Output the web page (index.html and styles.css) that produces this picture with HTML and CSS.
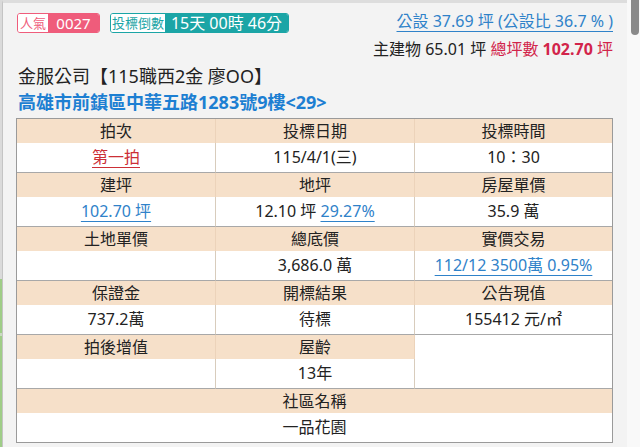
FILE: index.html
```html
<!DOCTYPE html>
<html lang="zh-Hant">
<head>
<meta charset="utf-8">
<link rel="stylesheet" href="styles.css">
</head>
<body>
<div class="page">
  <div class="edge"></div>
  <div class="panel">
    <div class="top">
      <div class="badges">
        <div class="badge pink"><span class="lbl lbl-pop">人氣</span><span class="val val-pop">0027</span></div>
        <div class="badge teal"><span class="lbl lbl-cd">投標倒數</span><span class="val val-cd">15天 00時 46分</span></div>
      </div>
      <div class="areas">
        <div class="line"><a class="link">公設 37.69 坪 (公設比 36.7 % )</a></div>
        <div class="line">主建物 65.01 坪 <span class="red">總坪數 <b>102.70</b> 坪</span></div>
      </div>
    </div>
    <div class="title">金服公司【115職西2金 廖OO】</div>
    <div class="addr">高雄市前鎮區中華五路1283號9樓&lt;29&gt;</div>
    <div class="sheet">
      <div class="h">拍次</div><div class="h">投標日期</div><div class="h">投標時間</div>
      <div class="v"><a class="redlink">第一拍</a></div><div class="v">115/4/1(三)</div><div class="v">10：30</div>

      <div class="h">建坪</div><div class="h">地坪</div><div class="h">房屋單價</div>
      <div class="v"><a class="link">102.70 坪</a></div><div class="v"><span>12.10 坪 <a class="link">29.27%</a></span></div><div class="v">35.9 萬</div>

      <div class="h">土地單價</div><div class="h">總底價</div><div class="h">實價交易</div>
      <div class="v"></div><div class="v">3,686.0 萬</div><div class="v"><a class="link">112/12 3500萬 0.95%</a></div>

      <div class="h">保證金</div><div class="h">開標結果</div><div class="h">公告現值</div>
      <div class="v">737.2萬</div><div class="v">待標</div><div class="v">155412 元/㎡</div>

      <div class="h">拍後增值</div><div class="h">屋齡</div><div class="blank"></div>
      <div class="v"></div><div class="v">13年</div>

      <div class="h wide">社區名稱</div>
      <div class="v wide last">一品花園</div>
    </div>
  </div>
  <div class="scroll"><div class="thumb"></div></div>
</div>
</body>
</html>
```

FILE: styles.css
```css
* { box-sizing: border-box; }
html, body { margin: 0; padding: 0; }
body {
  font-family: "Noto Sans", "Noto Sans CJK TC", sans-serif;
  color: #222;
  background: #f8f8f8;
}
.page {
  display: flex;
  width: 640px;
  height: 447px;
  overflow: hidden;
}
.edge {
  width: 2px;
  flex: none;
  background: linear-gradient(#dadada 0, #dadada 279px, #9fcd88 279px, #9fcd88 333px, #c9dcc0 333px, #c9dcc0 336px, #9fcd88 336px);
}
.panel {
  width: 625px;
  flex: none;
  background: #f3f3f3;
  border-top: 3px solid #dddddd;
  border-left: 1px solid #c4c4c4;
  padding: 4px 14px 0 13px;
}
.scroll {
  flex: 1;
  background: #f9f9f9;
  padding-left: 4px;
}
.thumb {
  width: 8px;
  height: 35px;
  background: #8a8a8a;
  border-radius: 0 0 4px 4px;
}
.top {
  display: flex;
  justify-content: space-between;
  align-items: flex-start;
}
.badges {
  display: flex;
  gap: 10px;
  margin-top: 6px;
  margin-left: 1px;
}
.badge {
  display: flex;
  height: 20px;
  border: 1px solid;
  border-radius: 3px;
  overflow: hidden;
}
.badge.pink { border-color: #ef5c7b; }
.badge.teal { border-color: #1ba5a6; }
.lbl {
  display: flex;
  align-items: center;
  justify-content: center;
  background: #fff;
  font-size: 13px;
  line-height: 18px;
}
.val {
  display: flex;
  align-items: center;
  justify-content: center;
  color: #fff;
  line-height: 18px;
}
.lbl-pop { width: 30px; color: #ef5c7b; }
.val-pop { width: 51px; background: #ef5c7b; font-size: 15px; }
.lbl-cd { width: 54px; color: #1ba5a6; }
.val-cd { width: 123px; background: #1ba5a6; font-size: 16px; }
.areas {
  text-align: right;
  font-size: 16px;
  line-height: 28px;
}
.link {
  color: #2f82c9;
  text-decoration: underline;
  text-underline-offset: 4px;
  text-decoration-thickness: 1px;
}
.red { color: #d2244a; }
.red b { font-weight: 700; }
.title {
  margin-left: 2px;
  font-size: 18px;
  line-height: 26px;
  color: #222;
}
.addr {
  margin-left: 2px;
  font-size: 18px;
  font-weight: 700;
  line-height: 26px;
  color: #1d7fd2;
}
.sheet {
  margin-top: 3px;
  display: grid;
  grid-template-columns: 199px 199px 197px;
  border: 1px solid #9a9a9a;
  background: #fff;
  font-size: 16px;
}
.h, .v, .blank {
  display: flex;
  align-items: center;
  justify-content: center;
  white-space: pre;
}
.h {
  height: 24px;
  background: #f6e0c9;
  line-height: 24px;
}
.v {
  height: 30px;
  background: #fff;
  border-bottom: 1px solid #a8a8a8;
  line-height: 29px;
}
.h:nth-child(3n+1), .h:nth-child(3n+2),
.v:nth-child(3n+1), .v:nth-child(3n+2) {
  border-right: 1px solid #d8ccbc;
}
.h:nth-child(3n+1), .h:nth-child(3n+2) { border-right-color: #ecd3ba; }
.blank {
  grid-row: span 2;
  background: #fff;
  border-bottom: 1px solid #a8a8a8;
}
.wide {
  grid-column: 1 / -1;
  border-right: none !important;
}
.v.last {
  height: 29px;
  border-bottom: none;
}
.redlink {
  color: #cc2f36;
  text-decoration: underline;
  text-underline-offset: 4px;
  text-decoration-thickness: 1px;
}
```
